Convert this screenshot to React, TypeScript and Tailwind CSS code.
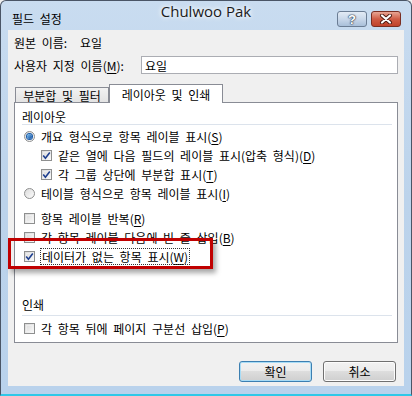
import React from 'react';

const Mn = ({ text, k }: { text: string; k: string }) => (
  <span>
    {text}(<span className="underline underline-offset-[2px]">{k}</span>)
  </span>
);

const CheckBox = ({ checked }: { checked?: boolean }) => (
  <span className="relative inline-flex w-[11px] h-[11px] shrink-0 border border-[#8e8f8f] bg-gradient-to-br from-[#d8d8d8] to-[#fbfbfb] items-center justify-center">
    <span className="absolute inset-[1px] border border-[#f4f4f4]/60" />
    {checked && (
      <svg width="9" height="9" viewBox="0 0 9 9" className="relative">
        <path d="M1.2 4.6 L3.4 7.2 L7.8 1.4" fill="none" stroke="#1e3f8f" strokeWidth="1.6" />
      </svg>
    )}
  </span>
);

const Radio = ({ checked }: { checked?: boolean }) => (
  <span className="inline-flex w-[11px] h-[11px] shrink-0 rounded-full border border-[#8e8f8f] bg-gradient-to-br from-[#dcdcdc] to-[#fbfbfb] items-center justify-center">
    {checked && (
      <span className="w-[5px] h-[5px] rounded-full bg-gradient-to-br from-[#7ec3f2] to-[#0f4c9e] ring-1 ring-[#1a5aa8]" />
    )}
  </span>
);

const Row = ({ children, indent, className = '' }: { children: React.ReactNode; indent?: boolean; className?: string }) => (
  <div className={`flex items-center h-[19px] gap-[6px] ${indent ? 'pl-[26px]' : 'pl-[9px]'} ${className}`}>
    {children}
  </div>
);

export default function App() {
  return (
    <div className="relative w-[412px] h-[396px] bg-[#f0f0f0] font-['Noto_Sans_CJK_KR','Noto_Sans',sans-serif] text-[12px] text-black leading-[15px] [word-spacing:3px]">
      {/* window frame */}
      <div className="flex flex-col w-full h-full rounded-t-[6px] border border-[#4a5566] bg-gradient-to-b from-[#c9dcf0] via-[#bcd3eb] to-[#b9d2ec] border-b-[2px] border-b-[#2fc8e8]">
        {/* title bar */}
        <div className="relative h-[29px] flex items-start pl-[11px] pr-[10px]">
          <span className="mt-[10px]">필드 설정</span>
          <div className="ml-auto mt-[10px] flex gap-[4px]">
            <div className="w-[30px] h-[16px] rounded-[3px] border border-[#6b7d94] bg-gradient-to-b from-[#e3ebf5] via-[#c9d8ea] to-[#a9bfd9] flex items-center justify-center text-white font-bold text-[13px] leading-none [text-shadow:0_0_1px_#2b3b52,0_0_1px_#2b3b52,0_0_2px_#2b3b52] font-['Liberation_Sans',sans-serif]">
              ?
            </div>
            <div className="w-[30px] h-[16px] rounded-[3px] border border-[#7a2e22] bg-gradient-to-b from-[#e7a594] via-[#cf5c45] to-[#c0432c] flex items-center justify-center">
              <svg width="14" height="10" viewBox="0 0 14 10">
                <path d="M3 1.5 L11 8.5 M11 1.5 L3 8.5" stroke="#4a1810" strokeWidth="4" strokeLinecap="round" />
                <path d="M3 1.5 L11 8.5 M11 1.5 L3 8.5" stroke="#ffffff" strokeWidth="2.2" strokeLinecap="round" />
              </svg>
            </div>
          </div>
          <span className="absolute left-0 right-0 top-[1px] text-center text-[15px] leading-[18px] [word-spacing:0px] font-['Open_Sans',sans-serif] text-[#1b1b1b] [text-shadow:0_0_6px_#ffffff,0_0_4px_#ffffff]">
            Chulwoo Pak
          </span>
        </div>

        {/* client area */}
        <div className="mx-[7px] h-[356px] bg-[#f0f0f0] flex flex-col px-[6px]">
          <div className="mt-[5px] h-[15px] flex">
            <span className="w-[66px]">원본 이름:</span>
            <span>요일</span>
          </div>
          <div className="mt-[6px] h-[18px] flex items-center">
            <span className="w-[127px]">
              <Mn text="사용자 지정 이름" k="M" />:
            </span>
            <div className="flex-1 h-[18px] border border-[#abadb3] bg-white px-[3px] flex items-center">요일</div>
          </div>

          {/* tabs */}
          <div className="mt-[10px] flex items-end pl-[1px] h-[18px]">
            <div className="w-[94px] h-[15px] border border-b-0 border-[#898c95] bg-gradient-to-b from-[#f2f2f2] to-[#e3e3e3] flex items-center justify-center">
              부분합 및 필터
            </div>
            <div className="relative z-10 w-[114px] h-[19px] -mb-[1px] border border-b-0 border-[#898c95] bg-white flex items-center justify-center">
              레이아웃 및 인쇄
            </div>
          </div>

          {/* panel */}
          <div className="relative h-[241px] border border-[#898c95] bg-white flex flex-col">
            <div className="pt-[6px] pl-[7px] pr-[5px]">
              <div className="h-[15px]">레이아웃</div>
              <div className="h-px bg-[#dce3ec]" />
            </div>
            <Row className="mt-[2px]">
              <Radio checked />
              <Mn text="개요 형식으로 항목 레이블 표시" k="S" />
            </Row>
            <Row indent>
              <CheckBox checked />
              <Mn text="같은 열에 다음 필드의 레이블 표시(압축 형식)" k="D" />
            </Row>
            <Row indent>
              <CheckBox checked />
              <Mn text="각 그룹 상단에 부분합 표시" k="T" />
            </Row>
            <Row>
              <Radio />
              <Mn text="테이블 형식으로 항목 레이블 표시" k="I" />
            </Row>
            <Row className="mt-[6px]">
              <CheckBox />
              <Mn text="항목 레이블 반복" k="R" />
            </Row>
            <Row>
              <CheckBox />
              <Mn text="각 항목 레이블 다음에 빈 줄 삽입" k="B" />
            </Row>
            <Row>
              <CheckBox checked />
              <span className="outline outline-1 outline-dotted outline-[#333] px-[1px]">
                <Mn text="데이터가 없는 항목 표시" k="W" />
              </span>
            </Row>
            <div className="mt-[31px] pl-[7px] pr-[5px]">
              <div className="h-[15px]">인쇄</div>
              <div className="mt-[3px] h-px bg-[#dce3ec]" />
            </div>
            <Row className="mt-[3px]">
              <CheckBox />
              <Mn text="각 항목 뒤에 페이지 구분선 삽입" k="P" />
            </Row>
          </div>

          {/* buttons */}
          <div className="mt-[18px] flex justify-end gap-[11px] pr-[2px]">
            <button className="w-[73px] h-[21px] rounded-[3px] border border-[#3c7fb1] bg-[linear-gradient(#f2f2f2_0%,#ebebeb_50%,#dddddd_50%,#cfcfcf_100%)] shadow-[inset_0_0_0_1px_#a8dcf6]">
              확인
            </button>
            <button className="w-[73px] h-[21px] rounded-[3px] border border-[#707070] bg-[linear-gradient(#f2f2f2_0%,#ebebeb_50%,#dddddd_50%,#cfcfcf_100%)] shadow-[inset_0_0_0_1px_#fcfcfc]">
              취소
            </button>
          </div>
        </div>
      </div>

      {/* annotation highlight */}
      <div className="absolute left-[8px] top-[238px] w-[205px] h-[31px] border-[3px] border-[#c00000] shadow-[3px_4px_5px_rgba(0,0,0,0.35)]" />
    </div>
  );
}
